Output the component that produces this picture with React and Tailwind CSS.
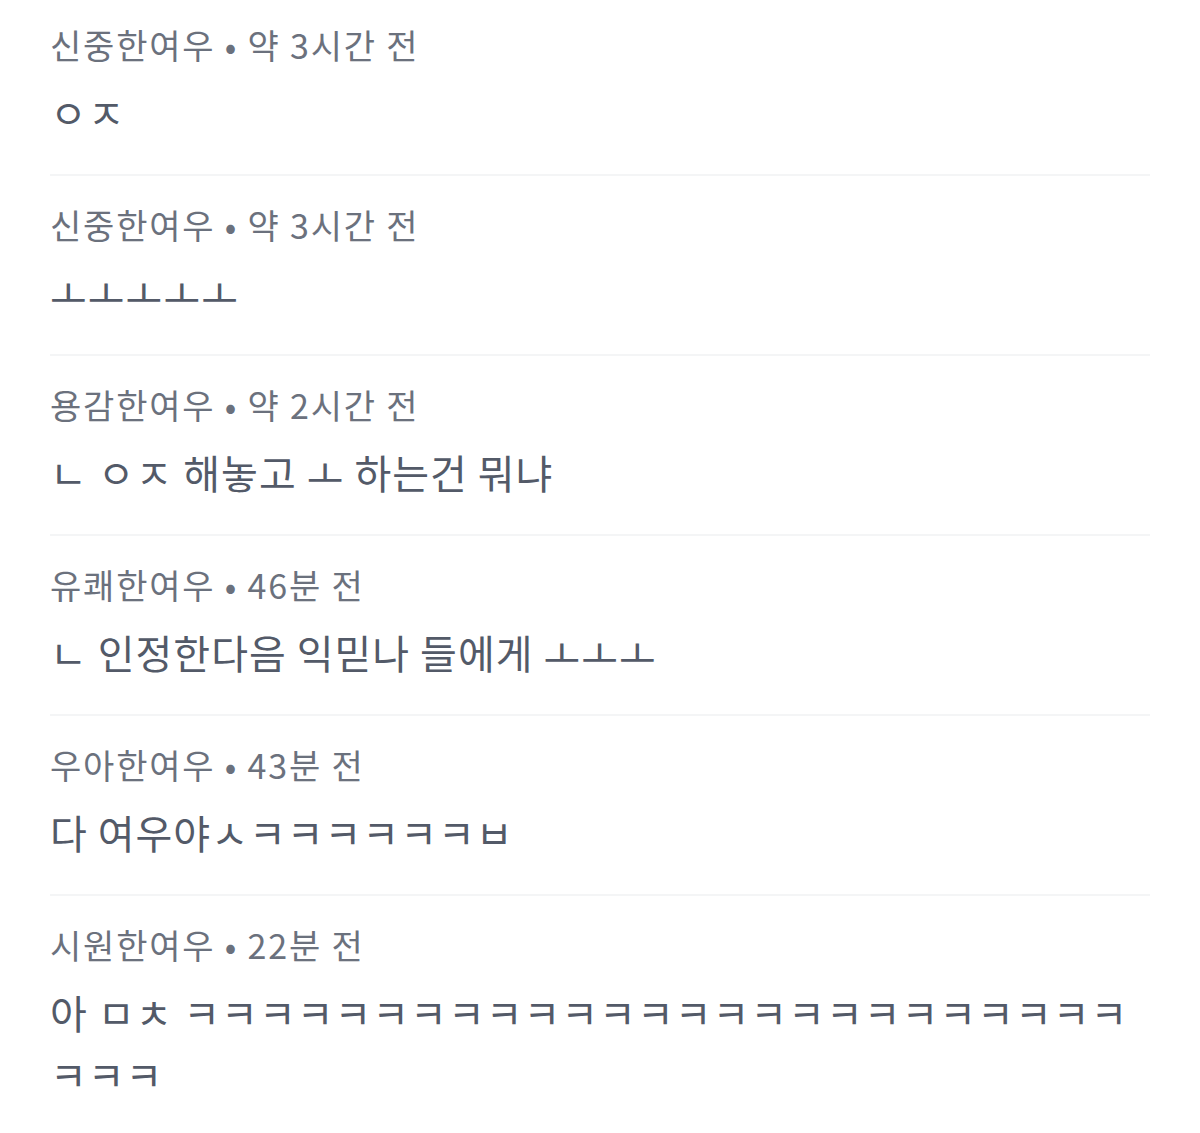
import React from 'react'

const comments = [
  { name: '신중한여우', time: '약 3시간 전', text: 'ㅇㅈ' },
  { name: '신중한여우', time: '약 3시간 전', text: 'ㅗㅗㅗㅗㅗ' },
  { name: '용감한여우', time: '약 2시간 전', text: 'ㄴ ㅇㅈ 해놓고 ㅗ 하는건 뭐냐' },
  { name: '유쾌한여우', time: '46분 전', text: 'ㄴ 인정한다음 익믿나 들에게 ㅗㅗㅗ' },
  { name: '우아한여우', time: '43분 전', text: '다 여우야ㅅㅋㅋㅋㅋㅋㅋㅂ' },
  {
    name: '시원한여우',
    time: '22분 전',
    text: '아 ㅁㅊ ㅋㅋㅋㅋㅋㅋㅋㅋㅋㅋㅋㅋㅋㅋㅋㅋㅋㅋㅋㅋㅋㅋㅋㅋㅋㅋㅋㅋ',
  },
]

export default function App() {
  return (
    <div
      className="min-h-[1133px] bg-white px-[50px]"
      style={{ fontFamily: '"Noto Sans CJK KR", "Noto Sans", sans-serif' }}
    >
      {comments.map((c, i) => (
        <div
          key={i}
          className={`${i === 0 ? 'pt-[21px]' : 'pt-[25px]'} pb-[31px] ${
            i < comments.length - 1 ? 'border-b-2 border-[#f4f5f6]' : ''
          }`}
        >
          <div className="text-[34px] leading-[48px] text-[#6b717d] tracking-[1.8px]">
            {c.name} • {c.time}
          </div>
          <div className="mt-[12px] text-[40px] leading-[62px] text-[#535a68] tracking-[1px] break-all">
            {c.text}
          </div>
        </div>
      ))}
    </div>
  )
}
